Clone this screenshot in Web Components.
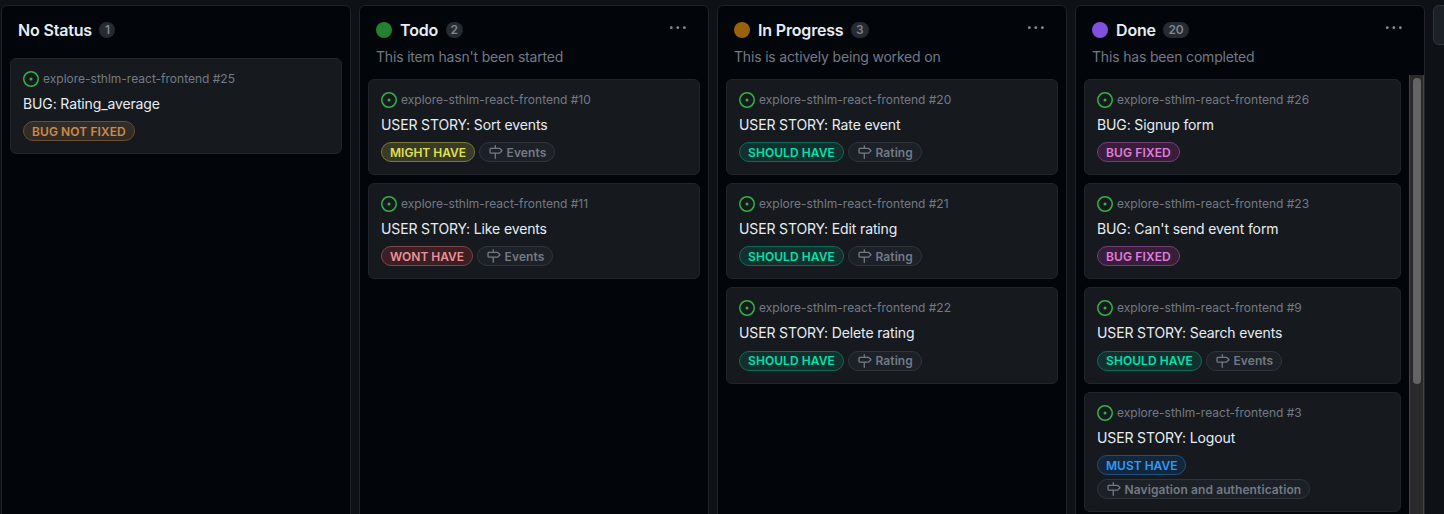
<!DOCTYPE html>
<html lang="en">
<head>
<meta charset="utf-8">
<title>Project board</title>
<style>
html,body{margin:0;height:100%;overflow:hidden;background:#0e1116}
body{font-family:Inter,"Liberation Sans",sans-serif;color:#e6edf3}
</style>
</head>
<body>
<project-board>
  <board-column heading="No Status" count="1">
    <issue-card number="25" heading="BUG: Rating_average"><issue-label kind="orange">BUG NOT FIXED</issue-label></issue-card>
  </board-column>
  <board-column heading="Todo" count="2" color="#238130" note="This item hasn't been started">
    <issue-card number="10" heading="USER STORY: Sort events"><issue-label kind="yellow">MIGHT HAVE</issue-label><issue-label kind="milestone">Events</issue-label></issue-card>
    <issue-card number="11" heading="USER STORY: Like events"><issue-label kind="red">WONT HAVE</issue-label><issue-label kind="milestone">Events</issue-label></issue-card>
  </board-column>
  <board-column heading="In Progress" count="3" color="#9a6208" note="This is actively being worked on">
    <issue-card number="20" heading="USER STORY: Rate event"><issue-label kind="teal">SHOULD HAVE</issue-label><issue-label kind="milestone">Rating</issue-label></issue-card>
    <issue-card number="21" heading="USER STORY: Edit rating"><issue-label kind="teal">SHOULD HAVE</issue-label><issue-label kind="milestone">Rating</issue-label></issue-card>
    <issue-card number="22" heading="USER STORY: Delete rating"><issue-label kind="teal">SHOULD HAVE</issue-label><issue-label kind="milestone">Rating</issue-label></issue-card>
  </board-column>
  <board-column heading="Done" count="20" color="#8250df" note="This has been completed" scroll>
    <issue-card number="26" heading="BUG: Signup form"><issue-label kind="pink">BUG FIXED</issue-label></issue-card>
    <issue-card number="23" heading="BUG: Can't send event form"><issue-label kind="pink">BUG FIXED</issue-label></issue-card>
    <issue-card number="9" heading="USER STORY: Search events"><issue-label kind="teal">SHOULD HAVE</issue-label><issue-label kind="milestone">Events</issue-label></issue-card>
    <issue-card number="3" heading="USER STORY: Logout"><issue-label kind="blue">MUST HAVE</issue-label><issue-label kind="milestone">Navigation and authentication</issue-label></issue-card>
  </board-column>
</project-board>
<script>
const define = (name, render) => customElements.define(name, class extends HTMLElement {
  connectedCallback() {
    if (this.shadowRoot) return;
    this.attachShadow({ mode: 'open' }).innerHTML = render(this);
  }
});

define('project-board', () => `
<style>
:host{display:flex;gap:8px;padding:5px 0 0 1px;height:509px;overflow:hidden}
.add{flex:none;width:40px;height:38px;border:1px solid #30343b;border-radius:6px;background:#1c2027}
</style>
<slot></slot><div class="add"></div>`);

define('board-column', el => {
  const a = n => el.getAttribute(n);
  return `
<style>
:host{display:flex;flex-direction:column;flex:none;box-sizing:border-box;width:350px;height:530px;
  border:1px solid #1f2329;border-radius:6px;background:#02050a}
header{padding:16px 16px 0;height:${a('note') ? 53 : 36}px}
.row{display:flex;align-items:center;height:16px}
.dot{width:16px;height:16px;border-radius:50%;background:${a('color')};margin-right:8px}
h2{margin:0;font-size:16px;line-height:18px;font-weight:600;letter-spacing:-.17px;white-space:nowrap}
.count{margin-left:7.5px;box-sizing:border-box;height:16px;min-width:16px;padding:0 5px;border-radius:8px;background:#262b32;
  color:#7d8590;font-size:12px;line-height:16px;font-weight:600;text-align:center}
.more{margin-left:auto;margin-top:-5px;margin-right:5px;display:block}
p{margin:10px 0 0;font-size:14px;line-height:18px;color:#737a84;letter-spacing:-.18px;white-space:nowrap}
.body{display:flex;flex:1;min-height:0}
.cards{flex:1;display:flex;flex-direction:column;gap:8px;padding:${a('note') ? 3.7 : 0}px 8px 0}
.bar{width:13px;border:solid #454545;border-width:0 1px;background:#2a2a2a;height:460px}
.thumb{width:8px;height:306px;margin:3px 0 0 3px;border-radius:4px;background:#646464}
</style>
<header><div class="row">${a('color') ? '<span class="dot"></span>' : ''}<h2>${a('heading')}</h2><span class="count">${a('count')}</span>
${a('note') ? '<svg class="more" width="18" height="4" viewBox="0 0 18 4" fill="#848d97"><circle cx="2.3" cy="1.7" r="1.4"/><circle cx="8.8" cy="1.7" r="1.4"/><circle cx="15.4" cy="1.7" r="1.4"/></svg>' : ''}
</div>${a('note') ? `<p>${a('note')}</p>` : ''}</header>
<div class="body"><div class="cards"><slot></slot></div>${el.hasAttribute('scroll') ? '<div class="bar"><div class="thumb"></div></div>' : ''}</div>`;
});

define('issue-card', el => `
<style>
:host{display:block;flex:none;box-sizing:border-box;padding:12px;border:1px solid #21252b;border-radius:6px;background:#161a1f}
.repo{display:flex;align-items:center;gap:4px;height:16px;font-size:12px;color:#737a84;white-space:nowrap}
.repo span{line-height:16px;margin-top:-.3px}
svg{flex:none}
h3{margin:7px 0 7.33px;font-size:14px;line-height:20px;font-weight:400;letter-spacing:-.13px;color:#e6edf3;white-space:nowrap}
.labels{display:flex;flex-wrap:wrap;gap:4px}
</style>
<div class="repo"><svg width="16" height="16" viewBox="0 0 16 16" fill="#35b146"><path d="M8 9.5a1.5 1.5 0 1 0 0-3 1.5 1.5 0 0 0 0 3Z"/><path d="M8 0a8 8 0 1 1 0 16A8 8 0 0 1 8 0ZM1.5 8a6.5 6.5 0 1 0 13 0 6.5 6.5 0 0 0-13 0Z"/></svg><span>explore-sthlm-react-frontend #${el.getAttribute('number')}</span></div>
<h3>${el.getAttribute('heading')}</h3>
<div class="labels"><slot></slot></div>`);

const kinds = {
  orange: ['#c98b4f', '#332b25', '#6b4c31', .09],
  yellow: ['#dfe14f', '#3a3b26', '#77783a', 0],
  red: ['#ec9297', '#3b1f25', '#79454b', 0],
  teal: ['#02e2ae', '#13302f', '#0c6c5a', .08],
  pink: ['#e57bdc', '#371f3b', '#753f76', .13],
  blue: ['#2f9bf8', '#13273c', '#1d5080', 0],
  milestone: ['#737a84', '#1c2027', '#30343b', .1]
};
define('issue-label', el => {
  const kind = el.getAttribute('kind'), [fg, bg, line, tracking] = kinds[kind];
  return `
<style>
:host{display:flex;align-items:center;box-sizing:border-box;height:20px;padding:0 8px;border:1px solid ${line};border-radius:10px;
  background:${bg};color:${fg};font-size:12px;line-height:18px;font-weight:600;letter-spacing:${tracking}px;white-space:nowrap}
svg{margin-right:3.5px;flex:none}
span{padding-top:1px}
</style>
${kind === 'milestone' ? `<svg width="15" height="14" viewBox="0 0 16 16" fill="${fg}"><path d="M7.75 0a.75.75 0 0 1 .75.75V3h3.634c.414 0 .814.147 1.13.414l2.07 1.75a1.75 1.75 0 0 1 0 2.672l-2.07 1.75a1.75 1.75 0 0 1-1.13.414H8.5v5.25a.75.75 0 0 1-1.5 0V10H2.75A1.75 1.75 0 0 1 1 8.25v-3.5C1 3.784 1.784 3 2.75 3H7V.75A.75.75 0 0 1 7.75 0Zm4.384 8.5a.25.25 0 0 0 .161-.06l2.07-1.75a.248.248 0 0 0 0-.38l-2.07-1.75a.25.25 0 0 0-.161-.06H2.75a.25.25 0 0 0-.25.25v3.5c0 .138.112.25.25.25h9.384Z"/></svg>` : ''}<span><slot></slot></span>`;
});
</script>
</body>
</html>
